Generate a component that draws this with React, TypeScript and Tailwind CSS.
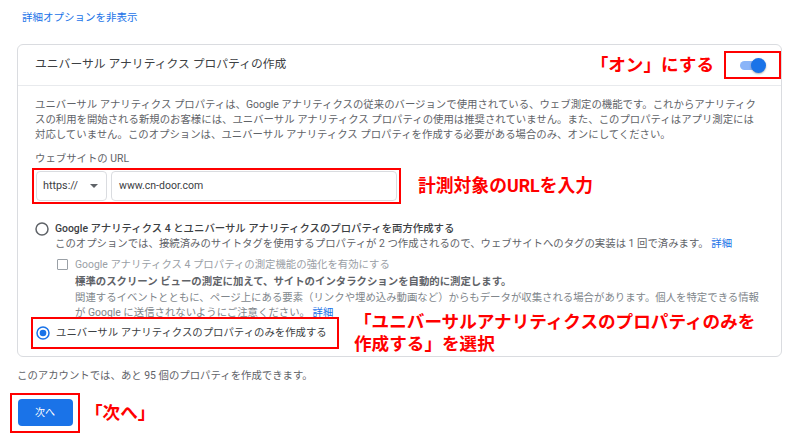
const Radio = ({ checked }: { checked?: boolean }) => (
  <svg width="14" height="14" viewBox="0 0 14 14" className="shrink-0">
    <circle cx="7" cy="7" r="6" fill="none" stroke={checked ? '#1a73e8' : '#5f6368'} strokeWidth="1.5" />
    {checked && <circle cx="7" cy="7" r="3.3" fill="#1a73e8" />}
  </svg>
)

const App = () => {
  return (
    <div className="w-[800px] h-[447px] overflow-hidden bg-white font-['Roboto','Noto_Sans_CJK_JP',sans-serif]">
      <div className="pl-[22px] pt-[10px] text-[10.5px] leading-[15px] text-[#1a73e8]">詳細オプションを非表示</div>

      <div className="ml-[17px] mt-[19px] w-[765px] rounded-[6px] border border-[#dadce0]">
        <div className="flex h-[41px] items-center justify-between border-b border-[#e8eaed] pl-[17px]">
          <div className="text-[11.8px] text-[#3c4043]">ユニバーサル アナリティクス プロパティの作成</div>
          <div className="flex items-center">
            <div className="mr-[10px] text-[17.6px] font-bold leading-[22px] text-[#ff0000]">「オン」にする</div>
            <div className="flex h-[28px] w-[57px] items-center border-2 border-[#ff0000] pl-[14px]">
              <div className="relative h-[9px] w-[20px] rounded-full bg-[#8ab4f8]">
                <div className="absolute right-[-6px] top-[-3px] h-[15px] w-[15px] rounded-full bg-[#1a73e8] shadow-[0_1px_2px_rgba(0,0,0,0.3)]" />
              </div>
            </div>
          </div>
        </div>

        <div className="px-[17px] pt-[11px] pb-[1px]">
          <p className="whitespace-nowrap text-[10.4px] leading-[15px] text-[#5f6368]">
            ユニバーサル アナリティクス プロパティは、Google アナリティクスの従来のバージョンで使用されている、ウェブ測定の機能です。これからアナリティク
            <br />
            スの利用を開始される新規のお客様には、ユニバーサル アナリティクス プロパティの使用は推奨されていません。また、このプロパティはアプリ測定には
            <br />
            対応していません。このオプションは、ユニバーサル アナリティクス プロパティを作成する必要がある場合のみ、オンにしてください。
          </p>

          <div className="mt-[9px] text-[10.4px] leading-[15px] text-[#5f6368]">ウェブサイトの URL</div>

          <div className="mt-[2px] flex items-center">
            <div className="-ml-[3px] flex h-[36px] items-center border-2 border-[#ff0000] px-[2px]">
              <div className="flex h-[30px] w-[71px] items-center justify-between rounded-[4px] border border-[#dadce0] pl-[6px] pr-[8px] text-[10.8px] text-[#3c4043]">
                <span>https://</span>
                <svg width="8" height="4" viewBox="0 0 8 4">
                  <path d="M0 0h8L4 4z" fill="#5f6368" />
                </svg>
              </div>
              <div className="ml-[4px] flex h-[30px] w-[286px] items-center rounded-[4px] border border-[#dadce0] pl-[7px] text-[10.5px] text-[#3c4043]">
                www.cn-door.com
              </div>
            </div>
            <div className="ml-[17px] text-[17.8px] font-bold leading-[22px] text-[#ff0000]">計測対象のURLを入力</div>
          </div>

          <div className="mt-[17px] flex">
            <div className="mt-[1px]">
              <Radio />
            </div>
            <div className="ml-[6px] whitespace-nowrap text-[10.4px] leading-[15px]">
              <div className="font-medium text-[#3c4043]">Google アナリティクス 4 とユニバーサル アナリティクスのプロパティを両方作成する</div>
              <div className="text-[#5f6368]">
                このオプションでは、接続済みのサイトタグを使用するプロパティが 2 つ作成されるので、ウェブサイトへのタグの実装は 1 回で済みます。 <span className="text-[#1a73e8]">詳細</span>
              </div>
            </div>
          </div>

          <div className="ml-[22px] mt-[6px] flex items-center">
            <div className="h-[11px] w-[11px] rounded-[1px] border-[1.5px] border-[#9aa0a6]" />
            <div className="ml-[7px] text-[10.4px] leading-[15px] text-[#9aa0a6]">Google アナリティクス 4 プロパティの測定機能の強化を有効にする</div>
          </div>

          <div className="ml-[40px] mt-[2px] whitespace-nowrap text-[10.4px] leading-[15.5px] text-[#80868b]">
            <div className="font-bold text-[#5f6368]">標準のスクリーン ビューの測定に加えて、サイトのインタラクションを自動的に測定します。</div>
            <div>関連するイベントとともに、ページ上にある要素（リンクや埋め込み動画など）からもデータが収集される場合があります。個人を特定できる情報</div>
            <div>
              が Google に送信されないようにご注意ください。 <span className="text-[#1a73e8]">詳細</span>
            </div>
          </div>

          <div className="-mt-[4px] flex items-start">
            <div className="-ml-[4px] flex h-[32px] w-[308px] items-center border-2 border-[#ff0000] pl-[3px]">
              <Radio checked />
              <span className="ml-[6px] text-[10.4px] text-[#3c4043]">ユニバーサル アナリティクスのプロパティのみを作成する</span>
            </div>
            <div className="-mt-[6px] ml-[15px] text-[17.6px] font-bold leading-[22px] text-[#ff0000]">
              「ユニバーサルアナリティクスのプロパティのみを
              <br />
              作成する」を選択
            </div>
          </div>
        </div>
      </div>

      <div className="ml-[17px] mt-[11px] text-[10.4px] leading-[15px] text-[#5f6368]">
        このアカウントでは、あと 95 個のプロパティを作成できます。
      </div>

      <div className="mt-[10px] flex items-center">
        <div className="ml-[10px] flex h-[40px] w-[70px] items-center justify-center border-2 border-[#ff0000]">
          <button className="h-[27px] w-[55px] rounded-[4px] bg-[#1a73e8] text-[10px] text-white">次へ</button>
        </div>
        <div className="ml-[5px] text-[17.6px] font-bold leading-[22px] text-[#ff0000]">「次へ」</div>
      </div>
    </div>
  )
}

export default App
